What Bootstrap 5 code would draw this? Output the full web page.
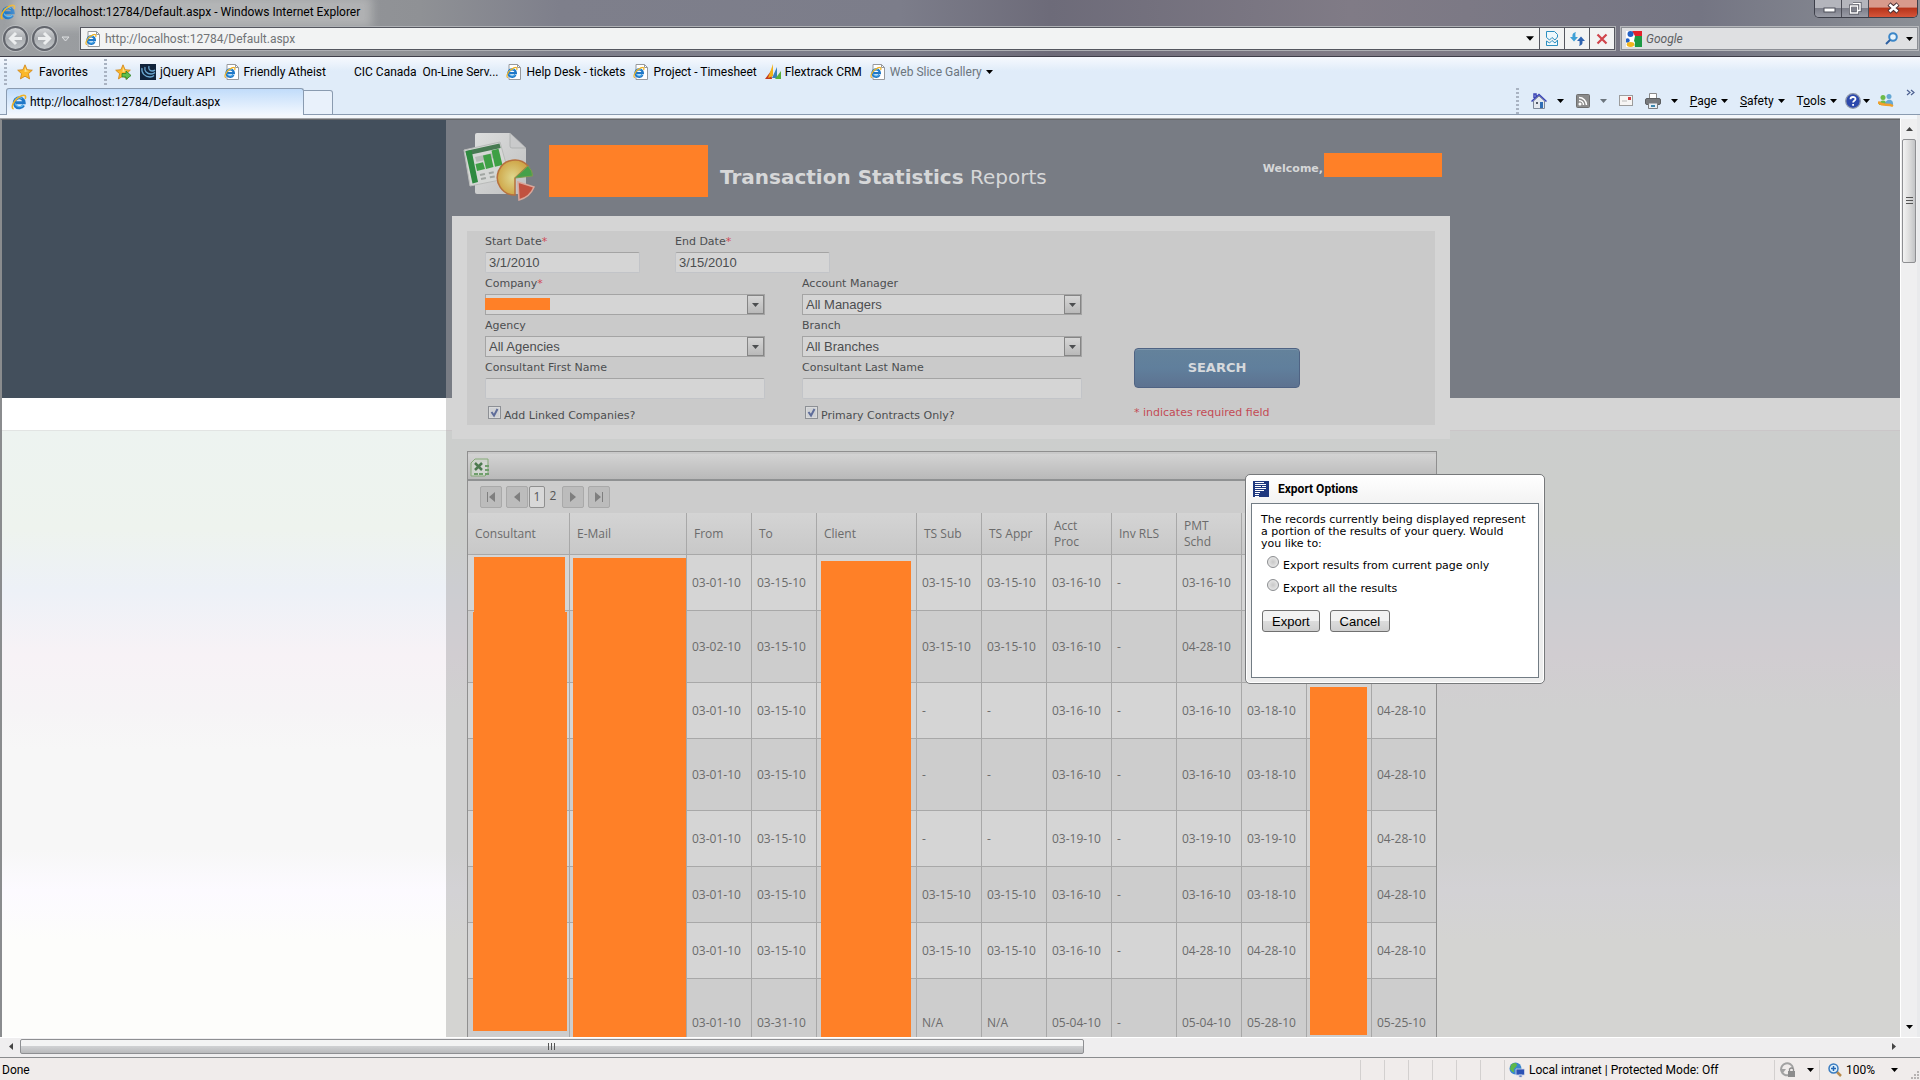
<!DOCTYPE html>
<html lang="en">
<head>
<meta charset="utf-8">
<meta name="viewport" content="width=device-width, initial-scale=1">
<title>Transaction Statistics Reports</title>
<link href="https://cdn.jsdelivr.net/npm/bootstrap@5.3.0/dist/css/bootstrap.min.css" rel="stylesheet">
<style>
:root{--hide:#ff8027;--ink:#4c4e50;--rule:#a8a8a8}
body{font-family:Roboto,"Open Sans",sans-serif;font-size:12px;line-height:16px;color:#000;background:#f0eceb}
a{color:inherit;text-decoration:none}
button{padding:0;border:0;background:none;color:inherit}
svg{display:block;flex:none}
.window-frame{background:linear-gradient(90deg,#9c9fa2 0,#8f9195 420px,#7e7f8b 560px,#7c7d8a 900px,#6d6b79 1050px,#807b86 1350px,#747583 1700px,#8b8f96 100%);border-bottom:1px solid #3e3e49}
.title-row{height:27px}
.title-text{line-height:16px;padding:0 4px 0 0;background:rgba(235,235,232,.35);box-shadow:0 0 10px 8px rgba(235,235,232,.35)}
.win-btns{height:18px;border:1px solid #3d3f49;border-top:0;border-radius:0 0 5px 5px;overflow:hidden;margin-right:2px}
.win-btns button{width:27px;height:17px;background:linear-gradient(#b4b5bc 0 45%,#7d7f8a 50%,#9a9ca6);border-right:1px solid #4a4b55}
.win-btns .close-win{width:48px;border:0;background:linear-gradient(#d89a8c 0 40%,#b7351b 50%,#d6553a)}
.addr-row{height:29px;padding:0 2px 6px 3px}
.round-btn{width:25px;height:25px;border-radius:50%;border:2px solid #62656c;background:linear-gradient(#d4d6d8,#a9acb0 50%,#c3c7ca);box-shadow:0 0 0 1px #b9bcbf}
.addr-box{height:23px;background:#f2f3f3;border:1px solid #55575f;box-shadow:0 0 0 1px #aeb0b4;margin:0 6px 0 10px;padding-left:4px}
.addr-box input{border:0;background:transparent;outline:0;padding:0;color:#717376;height:20px}
.addr-box .more{margin:0 5px}
.addr-box .slot{width:25px;height:21px;border-left:1px solid #55575f}
.find-box{width:297px;height:23px;background:#dfe0e2;border:1px solid #8c8f95;box-shadow:0 0 0 1px #b5b7bb}
.find-box input{border:0;background:transparent;outline:0;font-style:italic;color:#5d5f62;padding:0;min-width:0}
.find-box input::placeholder{color:#5d5f62}
.bars{background:linear-gradient(#f6f9fe,#e0ecf9 14px)}
.fav-row{height:30px;padding-left:4px}
.fav-row a,.fav-row button{display:flex;align-items:center;gap:4px;white-space:nowrap}
.grip{width:3px;height:26px;background:repeating-linear-gradient(#a9b3c2 0 2px,transparent 2px 4px)}
.tab-row{height:28px;padding-left:6px;border-bottom:1px solid #8a9bb0}
.tab-on{width:298px;height:27px;margin-bottom:-1px;border:1px solid #8a9bb0;border-bottom:0;border-radius:3px 3px 0 0;background:linear-gradient(#c1dcfa,#f3f8fe);padding-left:4px;gap:3px}
.tab-new{width:29px;height:25px;margin-bottom:-1px;border:1px solid #8a9bb0;border-left:0;border-radius:0 3px 0 0;background:#e9f1fb}
.cmd{height:27px;gap:12px;padding-right:5px}
.cmd .split{display:flex;align-items:center;gap:10px}
.cmd .tight{gap:2px}
.view{border-top:1px solid #66676a;border-left:2px solid #8a8c8e;margin-top:4px;box-shadow:0 -1px 0 #a3a5a8}
.strip{background:#f4f7fb}
.stage{position:relative;overflow:hidden;background:linear-gradient(#434f5c 0 278px,#fff 278px 310px,#e2e4e3 310px 311px,#edf3f0 311px,#eef3ee 410px,#edf1f7 470px,#f7f2f6 535px,#f6f4f6 590px,#f7f7f7 630px,#f7f7f7 730px,#fcfaff 770px,#fdfdfb 820px,#fdfdfb)}
.veil{position:absolute;top:0;bottom:0;left:444px;right:0;background:linear-gradient(#787c84 0 278px,#d5d5d5 278px 310px,#cac6c8 310px 311px,#cccecd 311px,#cccecb 410px,#cccdd1 470px,#d1cdd1 535px,#d0d0d0 590px,#d0d0d0 730px,#d3d2d5 770px,#d4d4d2 820px,#d4d4d2)}
.sheet{position:relative;width:998px;font-family:"DejaVu Sans",sans-serif;font-size:11px;color:var(--ink)}
.masthead{height:96px;padding:12px 8px 0 11px}
.hidden-part{background:var(--hide)}
.brand-part{width:159px;height:52px;margin:13px 12px 0 10px}
.user-part{width:118px;height:24px}
.site-name{font-size:20px;line-height:24px;color:#d6d7d8;margin:33px 0 0}
.greet{margin-top:21px}
.hello{color:#d6d7d8;font-weight:bold;padding:8px 1px 0 0}
.panel{background:#d5d5d5;padding:15px 15px 14px}
.panel-in{background:#cacaca;padding:3px 18px 0;height:194px}
.fld{margin-bottom:3px}
.fld label{display:block;line-height:16px;margin-bottom:2px;white-space:nowrap}
.req{color:#cf4a55}
.fld input,.fld select{display:block;width:100%;height:21px;border:1px solid #c2c4c8;border-top:1px solid #a4a4a4;border-radius:2px;background:#d5d5d5;color:var(--ink);font:13px "Liberation Sans",sans-serif;padding:0 3px;appearance:none;outline:0}
.fld select{border:1px solid #a4a4a4;border-radius:0}
.drop{position:absolute;right:1px;top:1px;width:17px;height:19px;border:1px solid #858585;background:linear-gradient(#d6d6d6,#b9b9b9);pointer-events:none}
.date-line{gap:35px}
.form-cols{gap:37px}
.w-date{width:155px}.w-col{width:280px}
.act-col{margin-left:15px}
.check-line{display:flex;gap:3px;padding:4px 0 0 3px}
.check-line label{padding-top:2px}
.tick{appearance:none;width:13px;height:13px;margin:0;border:1px solid #8d9095;background:#cfd1d4;box-shadow:inset 0 0 0 1px #d9dadb}
.search-btn{width:166px;height:40px;border:1px solid #4f6383;border-radius:4px;background:linear-gradient(#64829b,#607f9c 50%,#5d7290);box-shadow:inset 0 1px 0 #7d97ad;color:#d6d9dc;font-weight:bold;font-size:13px}
.note{color:#c34a55;padding:17px 0 3px}
.results{position:relative;margin:12px 13px 0 15px;border:1px solid #8f8f8f;border-bottom:0;background:#ccc;font-family:"Open Sans",sans-serif;font-size:12px;color:#6b6b6b}
.tools{height:29px;border-top:2px solid #c9c9c9;border-bottom:2px solid #8f9192;background:linear-gradient(#d3d3d3,#b9b9b9);padding:2px 2px 0}
.pager{height:32px;padding:0 12px}
.pager button{width:22px;height:22px;border:1px solid #a9a9a9;border-radius:2px;background:#bcbcbc;display:flex;align-items:center;justify-content:center}
.pager a{width:16px;height:22px;line-height:20px;text-align:center;color:#555}
.pager .now{border:1px solid #8f8f8f;border-radius:2px;background:#d8d8d8}
.pager .pages{margin:0 1px}
.grid{width:968px;table-layout:fixed;border-collapse:separate;border-spacing:0}
.grid th{font-weight:normal;height:42px;padding:0 7px;background:linear-gradient(#d4d4d4,#c8c8c8);border-right:1px solid var(--rule);border-bottom:1px solid var(--rule);vertical-align:middle}
.grid td{height:56px;padding:0 5px;background:#d5d5d5;border-right:1px solid var(--rule);border-bottom:1px solid var(--rule);vertical-align:middle;white-space:nowrap}
.grid tr:nth-child(even) td{background:#cdcdcd}
.grid .tall td{height:72px}.grid .taller td{height:88px}
.grid th:last-child,.grid td:last-child{border-right:0}
.grid col{width:65px}
.grid .c-name{width:102px}.grid .c-mail{width:117px}.grid .c-cli{width:100px}.grid .c-end{width:64px}
.mask{position:absolute;background:var(--hide)}
.dlg{position:absolute;left:1243px;top:354px;width:300px;height:210px;border:1px solid #77797b;border-radius:5px;background:linear-gradient(#fff,#eee 40px,#eee);box-shadow:inset 0 0 0 1px #fff;padding:0 5px 5px}
.dlg-head{height:28px;font-weight:bold;padding-left:2px;gap:9px}
.dlg-body{height:175px;border:1px solid #727c84;background:#fff;padding:10px 9px;font-family:"DejaVu Sans",sans-serif;font-size:11px;line-height:12px}
.dlg-body p{margin:0 0 2px}
.dlg input{appearance:none;width:12px;height:12px;border:1px solid #8b8d90;border-radius:50%;margin:0;background:radial-gradient(#c8c8c8,#f1f1f1)}
.dlg .opt{height:23px;padding-left:6px}
.dlg .acts{gap:10px;padding:12px 0 0 1px}
.dlg button{height:22px;padding:0 9px;border:1px solid #707070;border-radius:3px;background:linear-gradient(#f2f2f2 0 48%,#dcdcdc 52%,#cfcfcf);font:13px "Liberation Sans",sans-serif}
.vbar{width:17px;background:#efeff0;border-left:1px solid #fff}
.vthumb{height:124px;margin:0 1px;border:1px solid #8e8f92;border-radius:2px;background:linear-gradient(90deg,#f3f3f3,#dedede 50%,#c2c3c5)}
.edge{width:3px;background:#e9eaec}
.hbar{height:20px;background:#efeeef;border-top:1px solid #fff;padding:0 20px 2px 2px}
.hthumb{width:1064px;height:15px;border:1px solid #8e8f92;border-radius:2px;background:linear-gradient(#f3f3f3 0 45%,#cfd0d2 50%,#b9babc)}
.status{height:23px;border-top:1px solid #8a8c8e;background:#f0eceb;padding:2px 0 0 2px}
.status .cell{width:24px;border-left:1px solid #d3d0cf}
</style>
</head>
<body class="vh-100 overflow-hidden d-flex flex-column">
<svg width="0" height="0" class="position-absolute">
<defs>
<symbol id="ie" viewBox="0 0 16 16"><path d="M12.600 11.200A5 5 0 1 1 13.200 8.700H4" fill="none" stroke="#1f78c8" stroke-width="3"/><path d="M12.200 11A4.800 4.800 0 0 1 4 9.500M4 6.500a4.800 4.800 0 0 1 7-2" fill="none" stroke="#58b8ef" stroke-width="1.200"/><path d="M2.600 15C-1 14 3 5 10.500 1.800c3.300-1.300 5 0 3.600 3" fill="none" stroke="#efb225" stroke-width="1.600"/></symbol>
<symbol id="pg" viewBox="0 0 16 16"><path d="M3 .5h8.500l3 3v12H3z" fill="#fff" stroke="#97999c"/><path d="M11.500.5v3h3" fill="none" stroke="#97999c"/><use href="#ie" x="0" y="2.500" width="12" height="12"/></symbol>
<symbol id="dn" viewBox="0 0 7 4"><path d="M0 0h7L3.500 4z" fill="currentColor"/></symbol>
<symbol id="star" viewBox="0 0 16 16"><path d="M8 .8l2.100 4.900 5.200.5-3.900 3.500 1.200 5.200L8 12.200l-4.600 2.700 1.200-5.200L.7 6.200l5.200-.5z" fill="#fbb829" stroke="#cf8213" stroke-width=".8"/><path d="M8 3l1.300 3.500 3.200.4-5 1z" fill="#fde28b"/></symbol>
</defs>
</svg>

<header class="window-frame flex-shrink-0">
  <div class="title-row d-flex">
    <div class="d-flex align-items-start flex-fill pt-1 gap-1">
      <svg width="17" height="16"><use href="#ie" width="16" height="16"/></svg>
      <span class="title-text">http://localhost:12784/Default.aspx - Windows Internet Explorer</span>
    </div>
    <div class="win-btns d-flex">
      <button aria-label="Minimize"><svg width="26" height="17"><rect x="9" y="8" width="11" height="4" fill="#fff" stroke="#4c4e58"/></svg></button>
      <button aria-label="Restore"><svg width="26" height="17" fill="none"><path d="M11 3.500h7v7h-2M8.500 6h7v7h-7z" stroke="#4c4e58" stroke-width="3"/><path d="M11 3.500h7v7h-2M8.500 6h7v7h-7z" stroke="#fff" stroke-width="1.500"/></svg></button>
      <button class="close-win" aria-label="Close"><svg width="48" height="17"><path d="M20 4l9 8M29 4l-9 8" stroke="#4b3034" stroke-width="4.500"/><path d="M20.500 4.500l8 7M28.500 4.500l-8 7" stroke="#fff" stroke-width="2.500"/></svg></button>
    </div>
  </div>
  <div class="addr-row d-flex align-items-center">
    <div class="d-flex align-items-center gap-1">
      <button class="round-btn" aria-label="Back"><svg width="21" height="21"><path d="M17 10.500H6M11 5l-5.500 5.500L11 16" stroke="#eceeef" stroke-width="3" fill="none"/></svg></button>
      <button class="round-btn" aria-label="Forward"><svg width="21" height="21"><path d="M4 10.500h11M10 5l5.500 5.500L10 16" stroke="#eceeef" stroke-width="3" fill="none"/></svg></button>
      <svg width="9" height="6"><path d="M1 1h7L4.500 5z" fill="#a5a8ab" stroke="#dcdee0"/></svg>
    </div>
    <div class="addr-box d-flex align-items-center flex-fill">
      <svg width="16" height="16"><use href="#pg"/></svg>
      <input class="flex-fill ms-1" aria-label="Address" value="http://localhost:12784/Default.aspx">
      <svg class="more" width="8" height="5"><use href="#dn"/></svg>
      <button class="slot d-flex align-items-center justify-content-center" aria-label="Compatibility view"><svg width="12" height="15"><path d="M.5.5h8l3 3V6L9 9 6 6.500 3.500 9 .5 6.500zM.5 14.500V10L3.500 12 6 9.500 9 12l2.500-3v5.500z" fill="#eef8fc" stroke="#2d8fc0"/></svg></button>
      <button class="slot d-flex align-items-center justify-content-center" aria-label="Refresh"><svg width="15" height="14"><path d="M6 0C2 1 2.500 3 2.500 5H0L4 9.500 8 5H5.500C5.500 3 5 1.500 6 0z" fill="#3fa0d6"/><path d="M9 14c4-1 3.500-3 3.500-5H15L11 4.500 7 9h2.500c0 2 .5 3.500-.5 5z" fill="#2e63b0"/></svg></button>
      <button class="slot d-flex align-items-center justify-content-center" aria-label="Stop"><svg width="12" height="12"><path d="M1.500 1.500l9 9M10.500 1.500l-9 9" stroke="#d0454c" stroke-width="2.200"/></svg></button>
    </div>
    <div class="find-box d-flex align-items-center ps-1 pe-1">
      <svg width="16" height="16"><rect width="16" height="16" fill="#fff"/><path d="M6 0h10v5H9z" fill="#e3212b"/><path d="M9 5h7v11H9c-1-3 1-4-1-6z" fill="#1d9a43"/><circle cx="4.500" cy="3" r="3" fill="#2362c5"/><circle cx="1.500" cy="9.500" r="2.200" fill="#2362c5"/><ellipse cx="4.500" cy="13.500" rx="3.800" ry="2.400" fill="#f3b61d"/></svg>
      <input class="flex-fill ms-1" aria-label="Search the web" placeholder="Google">
      <svg width="13" height="13" class="me-1"><circle cx="8" cy="5" r="3.800" fill="#e8f3fb" stroke="#3b86c8" stroke-width="2"/><path d="M5 8l-4 4" stroke="#2d5fa0" stroke-width="2"/></svg>
      <svg class="ms-1" width="7" height="4"><use href="#dn"/></svg>
    </div>
  </div>
</header>

<nav class="bars flex-shrink-0">
  <div class="fav-row d-flex align-items-center gap-2">
    <span class="grip"></span>
    <button><svg width="20" height="16"><use href="#star" x="2" width="16" height="16"/></svg>Favorites</button>
    <span class="grip ms-2"></span>
    <a href="#" aria-label="Add to favorites bar"><svg width="17" height="16"><use href="#star" width="16" height="16"/><path d="M7 9.500h4v-2.500l5 4.500-5 4v-2.500H7z" fill="#5fc04b" stroke="#2c7d22" stroke-width=".8"/></svg></a>
    <a href="#"><svg width="16" height="16"><rect width="16" height="16" fill="#10233b"/><path d="M2 4c-1 5 3 9 8 9 2 0 3-.5 4-1.500M5 3c-1 4 2 7 6 7 2 0 3-.5 4-1.500M9 2c-1 3 1 5 3 5 1.500 0 2.500-.5 3-1" fill="none" stroke="#6aa6cf" stroke-width="1.300"/></svg>jQuery API</a>
    <a href="#"><svg width="16" height="16"><use href="#pg"/></svg>Friendly Atheist</a>
    <a href="#" class="ps-3 ms-1">CIC Canada&nbsp; On-Line Serv...</a>
    <a href="#"><svg width="16" height="16"><use href="#pg"/></svg>Help Desk - tickets</a>
    <a href="#"><svg width="16" height="16"><use href="#pg"/></svg>Project - Timesheet</a>
    <a href="#"><svg width="16" height="16"><path d="M0 15L6 7l1 8z" fill="#c33a1e"/><path d="M3 14L8 0v12z" fill="#f3b31b"/><path d="M7 14l5-11v11z" fill="#3a80bd"/><path d="M10 15l6-8v8z" fill="#58b03c"/></svg>Flextrack CRM</a>
    <a href="#" class="text-secondary"><svg width="16" height="16"><use href="#pg"/></svg>Web Slice Gallery<svg class="text-black" width="7" height="4"><use href="#dn"/></svg></a>
  </div>
  <div class="tab-row d-flex align-items-end">
    <a href="#" class="tab-on d-flex align-items-center"><svg width="16" height="16"><use href="#ie"/></svg>http://localhost:12784/Default.aspx</a>
    <button class="tab-new" aria-label="New tab"></button>
    <div class="cmd d-flex align-items-center ms-auto">
      <span class="grip"></span>
      <button class="split" aria-label="Home"><svg width="16" height="16"><path d="M2.500 8v7.500h11V8L8 3z" fill="#e4e8ef" stroke="#7d8797"/><path d="M.5 8.500L8 1.500l7.500 7M3 5V1h2v3" fill="none" stroke="#3b44b5" stroke-width="1.500"/><path d="M5 9h2v2H5z" fill="#525a68"/><path d="M9 9h3v6H9z" fill="#2f6cb4"/></svg><svg width="7" height="4"><use href="#dn"/></svg></button>
      <button class="split" aria-label="Feeds"><svg width="14" height="14" fill="none" stroke="#fff" stroke-width="1.500"><rect x=".5" y=".5" width="13" height="13" rx="1" fill="#8b8b8b" stroke="#6f6f6f" stroke-width="1"/><path d="M3 6.500A4.500 4.500 0 0 1 7.500 11M3 3.500A7.500 7.500 0 0 1 10.500 11"/><circle cx="4" cy="10" r=".8"/></svg><svg class="text-secondary" width="7" height="4"><use href="#dn"/></svg></button>
      <button aria-label="Read mail"><svg width="14" height="11"><rect x=".5" y=".5" width="13" height="10" fill="#f6f5f4" stroke="#9c9c9c"/><rect x="9" y="2" width="3" height="3" fill="#d63c3f"/><path d="M3 6h5" stroke="#bbb"/></svg></button>
      <button class="split" aria-label="Print"><svg width="16" height="16"><path d="M4.500 6V.5h7V6" fill="#fff" stroke="#8a8a8a"/><rect x=".5" y="5.500" width="15" height="6" rx="1.500" fill="#77797c" stroke="#5c5e60"/><path d="M3.500 10h9v5.500h-9z" fill="#e9eef3" stroke="#7b7d80"/><path d="M6 12h4v2H6z" fill="#3c87b0"/></svg><svg width="7" height="4"><use href="#dn"/></svg></button>
      <button class="d-flex align-items-center gap-1"><span><u>P</u>age</span><svg width="7" height="4"><use href="#dn"/></svg></button>
      <button class="d-flex align-items-center gap-1"><span><u>S</u>afety</span><svg width="7" height="4"><use href="#dn"/></svg></button>
      <div class="d-flex align-items-center gap-2">
        <button class="d-flex align-items-center gap-1"><span>T<u>o</u>ols</span><svg width="7" height="4"><use href="#dn"/></svg></button>
        <button class="split tight" aria-label="Help"><svg width="16" height="16"><circle cx="8" cy="8" r="7.300" fill="#2c49ad" stroke="#8f98ab" stroke-width="1.300"/><path d="M5.500 6.300C5.500 3.300 10.500 3.300 10.500 6c0 1.800-2.400 1.700-2.400 3.500M8.100 11v1.800" fill="none" stroke="#fff" stroke-width="1.800"/></svg><svg width="7" height="4"><use href="#dn"/></svg></button>
        <button aria-label="Messenger"><svg width="16" height="16"><circle cx="5" cy="4.500" r="2.500" fill="#6dbb48"/><path d="M1 12c0-6 8-6 8 0z" fill="#6dbb48"/><circle cx="11" cy="3.500" r="2.500" fill="#64a7d4"/><path d="M7 12c0-7 9-7 8 0z" fill="#64a7d4"/><path d="M0 9c5 5 9 1 15 4" fill="none" stroke="#f1a02c" stroke-width="2.500"/></svg></button>
      </div>
      <svg class="mb-3" width="9" height="7"><path d="M1 1l3 2.500L1 6M5 1l3 2.500L5 6" fill="none" stroke="#4d6091" stroke-width="1.200"/></svg>
    </div>
  </div>
</nav>

<div class="strip flex-fill d-flex overflow-hidden">
<main class="view stage flex-fill">
  <div class="veil"></div>
  <div class="sheet mx-auto">
    <div class="masthead d-flex align-items-start">
      <svg width="76" height="70" viewBox="0 0 76 70"><defs><linearGradient id="pp" x1="0" y1="0" x2="1" y2="1"><stop offset="0" stop-color="#dcdddd"/><stop offset="1" stop-color="#bfc0c0"/></linearGradient><radialGradient id="pie"><stop offset="0" stop-color="#dfd78e"/><stop offset="1" stop-color="#cfa749"/></radialGradient></defs><path d="M14 1h33l16 15v46H14q-2 0-2-2V3q0-2 2-2z" fill="url(#pp)"/><path d="M47 1v13q0 2 2 2h14z" fill="#c9cacb" stroke="#9fa1a3" stroke-width=".6"/><path d="M1 18l36-8 10 36-40 8z" fill="#d5d7d5" stroke="#b9bbba"/><path d="M2.500 19l34-7.500 1.200 4.500-34 7.500z" fill="#477a52"/><path d="M2.500 19.500l6-1.500 6.500 32-5.500 1.500z" fill="#2f8a40"/><path d="M12 25l22-5 1.500 5-22 5z" fill="#b6bcb7"/><path d="M12.500 32l7.500-1.700L22 37l-8 2z" fill="#3ea045"/><path d="M20 23.500l7.500-1.700L30.500 35 23 37z" fill="#3ea045"/><path d="M28.500 18.500l7-1.700L39.500 33 32 34.800z" fill="#3ea045"/><path d="M17 43l20-4M18 47l16-3" stroke="#a1a6a2" stroke-width="2" stroke-dasharray="5 4"/><path d="M52 46V63A17.500 17.500 0 1 1 65 34z" fill="url(#pie)" stroke="#b7713e" stroke-width="1.500"/><path d="M52 46l13-12q5 5 4.500 10z" fill="#46a04a" stroke="#7f9b50"/><path d="M55 50l16 5q-4 10-15 13z" fill="#c1513f" stroke="#d9a79b" stroke-width="1.500"/></svg>
      <div class="hidden-part brand-part"></div>
      <h1 class="site-name"><b>Transaction Statistics</b> Reports</h1>
      <div class="greet ms-auto d-flex"><span class="hello">Welcome,</span><div class="hidden-part user-part"></div></div>
    </div>

    <form class="panel" onsubmit="return false">
      <div class="panel-in">
        <div class="date-line d-flex">
          <div class="fld w-date"><label for="sd">Start Date<span class="req">*</span></label><input id="sd" value="3/1/2010"></div>
          <div class="fld w-date"><label for="ed">End Date<span class="req">*</span></label><input id="ed" value="3/15/2010"></div>
        </div>
        <div class="form-cols d-flex">
          <div class="w-col">
            <div class="fld"><label for="co">Company<span class="req">*</span></label><div class="position-relative"><select id="co"><option></option></select><span class="drop d-flex align-items-center justify-content-center"><svg width="7" height="4"><use href="#dn"/></svg></span><div class="mask" style="left:0;top:4px;width:65px;height:12px"></div></div></div>
            <div class="fld"><label for="ag">Agency</label><div class="position-relative"><select id="ag"><option>All Agencies</option></select><span class="drop d-flex align-items-center justify-content-center"><svg width="7" height="4"><use href="#dn"/></svg></span></div></div>
            <div class="fld"><label for="fn">Consultant First Name</label><input id="fn"></div>
            <div class="check-line"><span class="position-relative"><input type="checkbox" class="tick d-block" id="lk" checked><svg class="position-absolute top-0 start-0 pe-none" width="13" height="13"><path d="M3.500 6l2.500 3.500L9.500 3" fill="none" stroke="#5f6d9a" stroke-width="2"/></svg></span><label for="lk">Add Linked Companies?</label></div>
          </div>
          <div class="w-col">
            <div class="fld"><label for="am">Account Manager</label><div class="position-relative"><select id="am"><option>All Managers</option></select><span class="drop d-flex align-items-center justify-content-center"><svg width="7" height="4"><use href="#dn"/></svg></span></div></div>
            <div class="fld"><label for="br">Branch</label><div class="position-relative"><select id="br"><option>All Branches</option></select><span class="drop d-flex align-items-center justify-content-center"><svg width="7" height="4"><use href="#dn"/></svg></span></div></div>
            <div class="fld"><label for="ln">Consultant Last Name</label><input id="ln"></div>
            <div class="check-line"><span class="position-relative"><input type="checkbox" class="tick d-block" id="pc" checked><svg class="position-absolute top-0 start-0 pe-none" width="13" height="13"><path d="M3.500 6l2.500 3.500L9.500 3" fill="none" stroke="#5f6d9a" stroke-width="2"/></svg></span><label for="pc">Primary Contracts Only?</label></div>
          </div>
          <div class="act-col d-flex flex-column justify-content-end">
            <button class="search-btn">SEARCH</button>
            <div class="note">* indicates required field</div>
          </div>
        </div>
      </div>
    </form>

    <section class="results">
      <div class="tools d-flex align-items-center"><button aria-label="Export to Excel"><svg width="20" height="20"><path d="M1 5l4-4h13v14l-3 3H1z" fill="#cdd3cb" stroke="#86aa78"/><path d="M4 4h13v13H4z" fill="#d3d6d2"/><path d="M5 5l7 7M12 5l-7 7" stroke="#4d7a50" stroke-width="2.500"/><path d="M15 7h4v2h-4zM15 11h4v2h-4zM15 15h4v2h-4zM9 15h4v2H9zM4 15h4v2H4z" fill="#6f9e6c"/></svg></button></div>
      <div class="pager d-flex align-items-center">
        <button aria-label="First page"><svg width="8" height="10" fill="#7f7f7f"><path d="M0 0h1v10H0zM8 0v10L2 5z"/></svg></button>
        <button class="ms-1" aria-label="Previous page"><svg width="6" height="10" fill="#7f7f7f"><path d="M6 0v10L0 5z"/></svg></button>
        <div class="pages d-flex"><a href="#" class="now">1</a><a href="#">2</a></div>
        <button aria-label="Next page"><svg width="6" height="10" fill="#7f7f7f"><path d="M0 0v10l6-5z"/></svg></button>
        <button class="ms-1" aria-label="Last page"><svg width="8" height="10" fill="#7f7f7f"><path d="M7 0h1v10H7zM0 0v10l6-5z"/></svg></button>
      </div>
      <table class="grid">
        <colgroup><col class="c-name"><col class="c-mail"><col><col><col class="c-cli"><col><col><col><col><col><col><col><col class="c-end"></colgroup>
        <thead><tr><th>Consultant</th><th>E-Mail</th><th>From</th><th>To</th><th>Client</th><th>TS Sub</th><th>TS Appr</th><th>Acct Proc</th><th>Inv RLS</th><th>PMT Schd</th><th></th><th></th><th></th></tr></thead>
        <tbody>
        <tr><td></td><td></td><td>03-01-10</td><td>03-15-10</td><td></td><td>03-15-10</td><td>03-15-10</td><td>03-16-10</td><td>-</td><td>03-16-10</td><td></td><td></td><td></td></tr>
        <tr class="tall"><td></td><td></td><td>03-02-10</td><td>03-15-10</td><td></td><td>03-15-10</td><td>03-15-10</td><td>03-16-10</td><td>-</td><td>04-28-10</td><td></td><td></td><td></td></tr>
        <tr><td></td><td></td><td>03-01-10</td><td>03-15-10</td><td></td><td>-</td><td>-</td><td>03-16-10</td><td>-</td><td>03-16-10</td><td>03-18-10</td><td></td><td>04-28-10</td></tr>
        <tr class="tall"><td></td><td></td><td>03-01-10</td><td>03-15-10</td><td></td><td>-</td><td>-</td><td>03-16-10</td><td>-</td><td>03-16-10</td><td>03-18-10</td><td></td><td>04-28-10</td></tr>
        <tr><td></td><td></td><td>03-01-10</td><td>03-15-10</td><td></td><td>-</td><td>-</td><td>03-19-10</td><td>-</td><td>03-19-10</td><td>03-19-10</td><td></td><td>04-28-10</td></tr>
        <tr><td></td><td></td><td>03-01-10</td><td>03-15-10</td><td></td><td>03-15-10</td><td>03-15-10</td><td>03-16-10</td><td>-</td><td>03-16-10</td><td>03-18-10</td><td></td><td>04-28-10</td></tr>
        <tr><td></td><td></td><td>03-01-10</td><td>03-15-10</td><td></td><td>03-15-10</td><td>03-15-10</td><td>03-16-10</td><td>-</td><td>04-28-10</td><td>04-28-10</td><td></td><td>04-28-10</td></tr>
        <tr class="taller"><td></td><td></td><td>03-01-10</td><td>03-31-10</td><td></td><td>N/A</td><td>N/A</td><td>05-04-10</td><td>-</td><td>05-04-10</td><td>05-28-10</td><td></td><td>05-25-10</td></tr>
        </tbody>
      </table>
      <div class="mask" style="left:6px;top:105px;width:91px;height:56px"></div>
      <div class="mask" style="left:5px;top:160px;width:94px;height:419px"></div>
      <div class="mask" style="left:105px;top:106px;width:113px;height:479px"></div>
      <div class="mask" style="left:353px;top:109px;width:90px;height:476px"></div>
      <div class="mask" style="left:842px;top:235px;width:57px;height:348px"></div>
    </section>
  </div>

  <div class="dlg" role="dialog" aria-label="Export Options">
    <div class="dlg-head d-flex align-items-center"><svg width="16" height="16"><rect width="16" height="16" fill="#20397f"/><path d="M2 1.500h9M2 3.500h11M2 5.500h6M9 5.500h4M2 7.500h11M2 9.500h9M2 11.500h5M2 13.500h4M2 15.500h4" stroke="#fff"/></svg><span>Export Options</span></div>
    <div class="dlg-body">
      <p>The records currently being displayed represent a portion of the results of your query. Would<br>you like to:</p>
      <div class="opt d-flex gap-1 pt-1"><input type="radio" name="ex" id="e1"><label for="e1" class="pt-1">Export results from current page only</label></div>
      <div class="opt d-flex gap-1 pt-1"><input type="radio" name="ex" id="e2"><label for="e2" class="pt-1">Export all the results</label></div>
      <div class="acts d-flex"><button>Export</button><button>Cancel</button></div>
    </div>
  </div>
</main>
<div class="vbar mt-1 flex-shrink-0 d-flex flex-column">
  <svg class="mx-auto my-2" width="7" height="4"><path d="M0 4h7L3.500 0z" fill="#444"/></svg>
  <div class="vthumb d-flex align-items-center justify-content-center"><svg width="7" height="8"><path d="M0 .5h7M0 3.500h7M0 6.500h7" stroke="#555"/></svg></div>
  <svg class="mx-auto mt-auto mb-2" width="7" height="4"><use href="#dn"/></svg>
</div>
<div class="edge flex-shrink-0"></div>
</div>

<div class="hbar flex-shrink-0 d-flex align-items-center">
  <svg class="mx-1" width="10" height="7"><path d="M7 0v7L3 3.500z" fill="#444"/></svg>
  <div class="hthumb d-flex align-items-center justify-content-center"><svg width="8" height="7"><path d="M.5 0v7M3.500 0v7M6.500 0v7" stroke="#555"/></svg></div>
  <svg class="ms-auto me-1" width="4" height="7"><path d="M0 0v7l4-3.500z" fill="#444"/></svg>
</div>
<footer class="status flex-shrink-0 d-flex align-items-stretch">
  <span class="align-self-center flex-fill">Done</span>
  <span class="cell"></span><span class="cell"></span><span class="cell"></span><span class="cell"></span><span class="cell"></span><span class="cell"></span>
  <span class="cell d-flex align-items-center gap-1 ps-1" style="width:270px"><svg width="16" height="16"><circle cx="6.500" cy="6.500" r="6" fill="#3a86cf"/><path d="M2 3c3-3 6-2 6 0S4 6 5 9 2 9 1 7z" fill="#5db84a"/><path d="M7 7h8.500v6H7zM10 13h3v2h-3z" fill="#2a51b5" stroke="#cfd6e6" stroke-width=".8"/></svg>Local intranet | Protected Mode: Off</span>
  <span class="cell d-flex align-items-center justify-content-around" style="width:45px"><svg width="16" height="16"><path d="M9 13A6 6 0 1 1 13 6" fill="none" stroke="#a2a2a2" stroke-width="2"/><path d="M0 7h6L3 11z" fill="#a2a2a2"/><path d="M8 9h7v6H8z" fill="#8c8c8c"/><path d="M9.500 9V7q2-2 4 0v2" fill="none" stroke="#8c8c8c" stroke-width="1.300"/></svg><svg width="7" height="4"><use href="#dn"/></svg></span>
  <span class="cell d-flex align-items-center ps-2" style="width:101px"><svg width="14" height="14" class="me-1"><path d="M8 8l5 5" stroke="#b98b4d" stroke-width="2.500"/><circle cx="5.500" cy="5.500" r="4.500" fill="#dff0fb" stroke="#3a7cc0" stroke-width="1.500"/><path d="M3 5.500h5M5.500 3v5" stroke="#2467b5" stroke-width="1.500"/></svg>100%<svg class="ms-3" width="7" height="4"><use href="#dn"/></svg><svg class="ms-auto align-self-end" width="10" height="10" fill="#b7b3b2"><path d="M7 7h2v2H7zM4 7h2v2H4zM1 7h2v2H1zM7 4h2v2H7zM4 4h2v2H4zM7 1h2v2H7z"/></svg></span>
</footer>
<script src="https://cdn.jsdelivr.net/npm/bootstrap@5.3.0/dist/js/bootstrap.bundle.min.js"></script>
</body>
</html>
